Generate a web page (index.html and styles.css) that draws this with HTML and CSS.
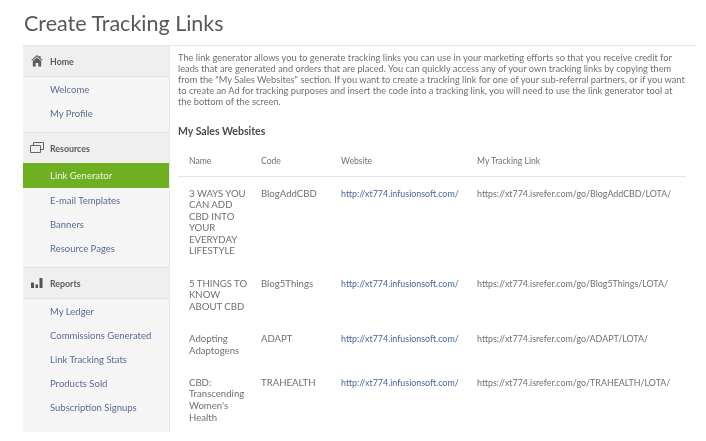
FILE: index.html
```html
<!DOCTYPE html>
<html lang="en">
<head>
<meta charset="utf-8">
<title>Create Tracking Links</title>
<link rel="stylesheet" href="styles.css">
</head>
<body>
<h1 class="title">Create Tracking Links</h1>
<div class="layout">
  <nav class="sidebar">
    <div class="nav-head">
      <svg class="nav-icon" viewBox="0 0 14 12" width="14" height="12"><path d="M7 0 L9.2 2 V1 H10.6 V3.2 L12.6 5 L12 5.8 L7 1.5 L2 5.8 L1.4 5 Z M2.8 6 L7 2.6 L11.2 6 V11.5 H8.3 V8 H5.7 V11.5 H2.8 Z" fill="#5c5c5c"/></svg>
      <span>Home</span>
    </div>
    <ul class="nav-list">
      <li><a href="#">Welcome</a></li>
      <li><a href="#">My Profile</a></li>
    </ul>
    <div class="nav-head nav-head-flush">
      <svg class="nav-icon" viewBox="0 0 14 12" width="14" height="12"><path d="M3.5 3 V.5 H13.5 V7.5 H10.5 M.5 3.5 H10.5 V10.5 H.5 Z" fill="none" stroke="#666" stroke-width="1"/></svg>
      <span>Resources</span>
    </div>
    <ul class="nav-list nav-list-flush">
      <li class="active"><a href="#">Link Generator</a></li>
      <li><a href="#">E-mail Templates</a></li>
      <li><a href="#">Banners</a></li>
      <li><a href="#">Resource Pages</a></li>
    </ul>
    <div class="nav-head">
      <svg class="nav-icon" viewBox="0 0 14 12" width="14" height="12"><path d="M1 5.5 H4 V11 H1 Z M5.5 7.5 H8 V11 H5.5 Z M9.5 1 H12.5 V11 H9.5 Z" fill="#555"/></svg>
      <span>Reports</span>
    </div>
    <ul class="nav-list">
      <li><a href="#">My Ledger</a></li>
      <li><a href="#">Commissions Generated</a></li>
      <li><a href="#">Link Tracking Stats</a></li>
      <li><a href="#">Products Sold</a></li>
      <li><a href="#">Subscription Signups</a></li>
    </ul>
  </nav>
  <main class="content">
    <p class="intro">The link generator allows you to generate tracking links you can use in your marketing efforts so that you receive credit for<br>leads that are generated and orders that are placed. You can quickly access any of your own tracking links by copying them<br>from the "My Sales Websites" section. If you want to create a tracking link for one of your sub-referral partners, or if you want<br>to create an Ad for tracking purposes and insert the code into a tracking link, you will need to use the link generator tool at<br>the bottom of the screen.</p>
    <h2 class="section">My Sales Websites</h2>
    <table class="sites">
      <thead>
        <tr><th class="col-name">Name</th><th class="col-code">Code</th><th class="col-site">Website</th><th>My Tracking Link</th></tr>
      </thead>
      <tbody>
        <tr>
          <td>3 WAYS YOU CAN ADD CBD INTO YOUR EVERYDAY LIFESTYLE</td>
          <td>BlogAddCBD</td>
          <td class="cell-url"><a href="#">http://xt774.infusionsoft.com/</a></td>
          <td class="cell-url">https://xt774.isrefer.com/go/BlogAddCBD/LOTA/</td>
        </tr>
        <tr>
          <td>5 THINGS TO KNOW ABOUT CBD</td>
          <td>Blog5Things</td>
          <td class="cell-url"><a href="#">http://xt774.infusionsoft.com/</a></td>
          <td class="cell-url">https://xt774.isrefer.com/go/Blog5Things/LOTA/</td>
        </tr>
        <tr>
          <td>Adopting Adaptogens</td>
          <td>ADAPT</td>
          <td class="cell-url"><a href="#">http://xt774.infusionsoft.com/</a></td>
          <td class="cell-url">https://xt774.isrefer.com/go/ADAPT/LOTA/</td>
        </tr>
        <tr>
          <td>CBD: Transcending Women's Health</td>
          <td>TRAHEALTH</td>
          <td class="cell-url"><a href="#">http://xt774.infusionsoft.com/</a></td>
          <td class="cell-url">https://xt774.isrefer.com/go/TRAHEALTH/LOTA/</td>
        </tr>
      </tbody>
    </table>
  </main>
</div>
</body>
</html>
```
FILE: styles.css
```css
* { box-sizing: border-box; }
html, body { margin: 0; height: 100%; overflow: hidden; }
body {
  background: #fff;
  font-family: Lato, "Open Sans", sans-serif;
  color: #666;
  padding: 0 10px 0 23px;
  filter: blur(.35px);
}
.title {
  margin: 0;
  padding-left: 1px;
  height: 45px;
  line-height: 46px;
  font-size: 21.5px;
  font-weight: 400;
  color: #585858;
}
.layout {
  display: flex;
  border-top: 1px solid #e6e6e6;
  height: 387px;
}
.sidebar {
  width: 147px;
  flex: none;
  background: #f5f5f5;
  border-right: 1px solid #e8e8e8;
}
.nav-head {
  display: flex;
  align-items: center;
  height: 31px;
  padding-left: 7px;
  background: #efefef;
  border-bottom: 1px solid #e2e2e2;
  font-size: 8.8px;
  font-weight: 700;
  color: #5a5a5a;
}
.nav-head-flush { height: 30px; border-bottom: 0; }
.nav-icon { width: 14px; margin-right: 6px; flex: none; }
.nav-list {
  list-style: none;
  margin: 0;
  padding: 0 0 7px;
  border-bottom: 1px solid #e2e2e2;
}
.nav-list:last-child { border-bottom: 0; }
.nav-list a {
  display: block;
  height: 24px;
  line-height: 25px;
  padding-left: 27px;
  font-size: 9.5px;
  color: #5a6b96;
  text-decoration: none;
}
.active { background: #6fb023; height: 25px; }
.nav-list .active a { color: #f0f5e4; line-height: 25px; }
.content {
  flex: 1;
  padding: 6px 0 0 8px;
  min-width: 0;
}
.intro {
  margin: 0;
  font-size: 9.25px;
  line-height: 11px;
  color: #707070;
  white-space: nowrap;
}
.section {
  margin: 17px 0 0;
  height: 14px;
  line-height: 14px;
  font-size: 10.5px;
  font-weight: 700;
  color: #4a4a4a;
}
.sites {
  width: 508px;
  margin-top: 9px;
  border-collapse: collapse;
  table-layout: fixed;
  font-size: 9.6px;
  line-height: 11.6px;
  color: #707070;
}
.sites th {
  height: 29px;
  padding: 2px 0 0 11px;
  text-align: left;
  font-weight: 400;
  font-size: 8.6px;
  border-bottom: 1px solid #e6e6e6;
}
.sites td {
  padding: 11px 2px 9.6px 11px;
  vertical-align: top;
}
.col-name { width: 72px; }
.col-code { width: 80px; }
.col-site { width: 136px; }
.sites .cell-url { padding-right: 0; font-size: 8.9px; white-space: nowrap; }
.sites a { color: #48659a; text-decoration: none; }
```
